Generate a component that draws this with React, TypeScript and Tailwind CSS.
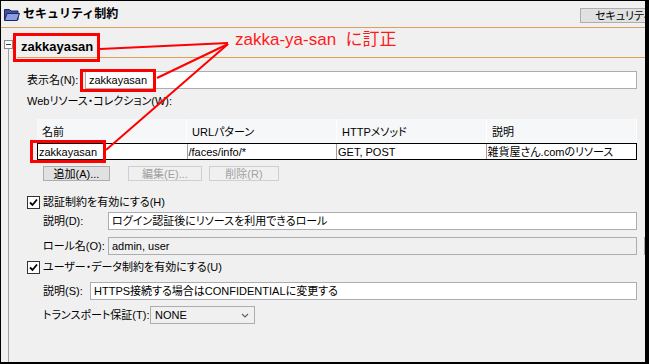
import React from "react";

const ORANGE = "bg-[#dba15c]";

function FolderIcon() {
  return (
    <svg width="16" height="13" viewBox="0 0 16 13">
      <path d="M0.5 1.5h5l1.5 1.5h7v9H0.5z" fill="#3d52a6" stroke="#1c2658" />
      <path d="M0.5 12.5l2.6-7h12.4l-2.6 7z" fill="#8d9fe4" stroke="#1c2658" />
    </svg>
  );
}

function CheckBox() {
  return (
    <span className="flex h-[13px] w-[13px] shrink-0 items-center justify-center border border-[#333333] bg-white">
      <svg width="11" height="11" viewBox="0 0 11 11">
        <path d="M2 5.5L4.5 8L9 2.5" fill="none" stroke="#000" strokeWidth="1.8" />
      </svg>
    </span>
  );
}

function TextBox({ value, disabled }: { value: string; disabled?: boolean }) {
  return (
    <div
      className={
        disabled
          ? "flex h-[18px] flex-1 items-center border border-[#adadad] bg-[#f0f0f0] pl-[3px]"
          : "flex h-[18px] flex-1 items-center border border-[#abadb3] bg-white pl-[3px]"
      }
    >
      {value}
    </div>
  );
}

function Button({ label, width, disabled, className }: { label: string; width: string; disabled?: boolean; className?: string }) {
  return (
    <div
      className={
        (disabled
          ? "border-[#cfcfcf] bg-[#f0f0f0] text-[#a0a0a0] "
          : "border-[#adadad] bg-[#e1e1e1] text-black ") +
        "flex h-full items-center justify-center border " +
        width +
        " " +
        (className ?? "")
      }
    >
      {label}
    </div>
  );
}

const columns = [
  { head: "名前", cell: "zakkayasan" },
  { head: "URLパターン", cell: "/faces/info/*" },
  { head: "HTTPメソッド", cell: "GET, POST" },
  { head: "説明", cell: "雑貨屋さん.comのリソース" },
];

export default function App() {
  return (
    <div className="relative h-[364px] w-[649px] overflow-hidden border-t border-b-2 border-l border-r-4 border-black bg-[#f0f0f0] font-['Liberation_Sans','Noto_Sans_CJK_JP',sans-serif] text-[11px] leading-[14px] text-black [font-feature-settings:'palt']">
      {/* title bar */}
      <div className="flex h-[26px] items-center pl-[3px]">
        <FolderIcon />
        <span className="ml-[3px] text-[12px] font-bold [font-feature-settings:normal]">セキュリティ制約</span>
        <div className="mr-[-15px] ml-auto flex h-[15px] w-[80px] shrink-0 items-center self-start mt-[7px] border border-[#adadad] bg-[#e1e1e1] pl-[14px] whitespace-nowrap overflow-hidden">
          セキュリティ制約
        </div>
      </div>
      <div className={"h-px " + ORANGE} />

      <div className="flex h-[334px]">
        {/* tree gutter */}
        <div className="flex w-[16px] shrink-0 flex-col items-start">
          <div className="mt-[12px] ml-[3px] flex h-[9px] w-[9px] items-center justify-center border border-[#8c8c8c] bg-white">
            <div className="h-px w-[5px] bg-[#404040]" />
          </div>
          <div className="ml-[7px] w-px flex-1 bg-[#a0a0a0]" />
        </div>

        <div className="flex-1">
          <div className="h-[30px] border-b border-[#dba15c] pt-[10px] pl-[4px] text-[13px] leading-[18px] font-bold">
            zakkayasan
          </div>

          <div className="pr-[8px] pl-[10px]">
            <div className="mt-[13px] flex h-[18px] items-center">
              <span className="w-[58px] shrink-0">表示名(N):</span>
              <TextBox value="zakkayasan" />
            </div>

            <div className="mt-[5px] h-[14px]">Webリソース・コレクション(W):</div>

            <div className="mt-[11px] ml-[10px] w-[600px]">
              <div className="grid h-[24px] grid-cols-4">
                {columns.map((c) => (
                  <div key={c.head} className="flex items-end border-r border-white bg-[#f6f7f9] pb-[4px] pl-[5px]">
                    {c.head}
                  </div>
                ))}
              </div>
              <div className="grid h-[17px] grid-cols-4 border border-black bg-white">
                {columns.map((c, i) => (
                  <div
                    key={c.head}
                    className={
                      "flex items-center overflow-hidden pl-px whitespace-nowrap " +
                      (i < 3 ? "border-r border-[#a0a0a0]" : "")
                    }
                  >
                    {c.cell}
                  </div>
                ))}
              </div>
            </div>

            <div className="mt-[6px] ml-[16px] flex h-[15px]">
              <Button label="追加(A)..." width="w-[67px]" />
              <Button label="編集(E)..." width="w-[74px]" disabled className="ml-[18px]" />
              <Button label="削除(R)" width="w-[70px]" disabled className="ml-[7px]" />
            </div>

            <div className="mt-[14px] flex h-[14px] items-center">
              <CheckBox />
              <span className="ml-[3px]">認証制約を有効にする(H)</span>
            </div>

            <div className="mt-[3px] flex h-[18px] items-center pl-[16px]">
              <span className="w-[65px] shrink-0">説明(D):</span>
              <TextBox value="ログイン認証後にリソースを利用できるロール" />
            </div>

            <div className="mt-[7px] flex h-[18px] items-center pl-[16px]">
              <span className="w-[65px] shrink-0">ロール名(O):</span>
              <TextBox value="admin, user" disabled />
              <div className="mr-[-27px] ml-[7px] h-[18px] w-[20px] shrink-0 border border-[#adadad] bg-[#e1e1e1]" />
            </div>

            <div className="mt-[5px] flex h-[14px] items-center">
              <CheckBox />
              <span className="ml-[3px]">ユーザー・データ制約を有効にする(U)</span>
            </div>

            <div className="mt-[8px] flex h-[18px] items-center pl-[16px]">
              <span className="w-[47px] shrink-0">説明(S):</span>
              <TextBox value="HTTPS接続する場合はCONFIDENTIALに変更する" />
            </div>

            <div className="mt-[6px] flex h-[18px] items-center pl-[16px]">
              <span className="w-[107px] shrink-0 whitespace-nowrap">トランスポート保証(T):</span>
              <div className="flex h-[18px] w-[105px] items-center justify-between border border-[#adadad] bg-[#f0f0f0] pr-[5px] pl-[4px]">
                <span>NONE</span>
                <svg width="8" height="5" viewBox="0 0 8 5">
                  <path d="M1 1L4 4L7 1" fill="none" stroke="#606060" strokeWidth="1.2" />
                </svg>
              </div>
            </div>
          </div>
        </div>
      </div>

      {/* red annotations */}
      <svg className="pointer-events-none absolute top-[-1px] left-[-1px]" width="649" height="364" viewBox="0 0 649 364">
        <g fill="none" stroke="#ff0000">
          <rect x="14.5" y="34.5" width="84" height="26" strokeWidth="3" />
          <rect x="81.5" y="70.5" width="73" height="20" strokeWidth="3" />
          <rect x="31.5" y="141.5" width="73" height="20" strokeWidth="3" />
          <path d="M100 49L228 43" strokeWidth="2" />
          <path d="M157 78L228 44" strokeWidth="2" />
          <path d="M106 150L228 44" strokeWidth="2" />
        </g>
      </svg>
      <span className="absolute top-[29px] left-[234px] text-[17px] leading-[20px] whitespace-pre text-[#ff1a1a] [font-feature-settings:normal]">
        zakka-ya-san  に訂正
      </span>
    </div>
  );
}
